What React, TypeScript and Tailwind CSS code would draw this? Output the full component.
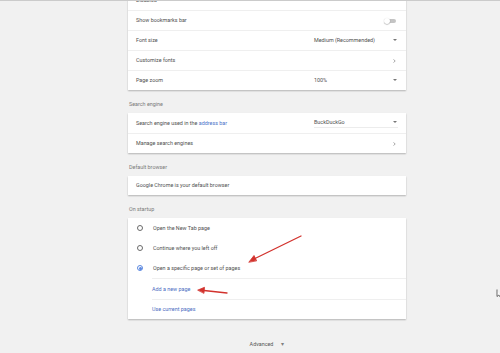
import React from 'react';

const Row = ({ children, first = false }: { children: React.ReactNode; first?: boolean }) => (
  <div className={`flex h-[20px] items-center pl-[8px] pr-[8px] ${first ? '' : 'border-t border-[#efefef]'}`}>{children}</div>
);

const Caret = ({ className = 'ml-auto mr-[1px]' }: { className?: string }) => (
  <div className={`h-0 w-0 border-x-[2px] border-t-[2.5px] border-x-transparent border-t-[#777] ${className}`} />
);

const Chevron = () => (
  <svg width="3" height="4" viewBox="0 0 3 4" className="ml-auto mr-[2px]">
    <path d="M0.6 0.4 L2.2 2 L0.6 3.6" fill="none" stroke="#8a8a8a" strokeWidth="0.8" />
  </svg>
);

const Select = ({ value, underline = false }: { value: string; underline?: boolean }) => (
  <div className={`ml-auto flex w-[84px] items-center ${underline ? 'border-b border-[#ececec]' : ''}`}>
    <span>{value}</span>
    <Caret />
  </div>
);

const Radio = ({ checked = false, label }: { checked?: boolean; label: string }) => (
  <div className="flex h-[20px] items-center pl-[9px]">
    <div className={`flex h-[6px] w-[6px] items-center justify-center rounded-full border ${checked ? 'border-[#5b88e0]' : 'border-[#6a6a6a]'}`}>
      {checked ? <div className="h-[3px] w-[3px] rounded-full bg-[#5b88e0]" /> : null}
    </div>
    <span className="ml-[10px]">{label}</span>
  </div>
);

const Header = ({ children }: { children: React.ReactNode }) => (
  <div className="pt-[9px] pb-[4px] pl-[1px] leading-[10px] text-[#7a7a7a]">{children}</div>
);

const card = 'bg-white shadow-[0_1px_1.5px_rgba(0,0,0,0.25)]';

export default function App() {
  return (
    <div className="relative h-[353px] w-[500px] overflow-hidden bg-[#f1f1f1] text-[5.4px] text-[#505050]" style={{ fontFamily: 'Roboto, "Liberation Sans", sans-serif' }}>
      <div className="ml-[128px] w-[278px]">
        <div className={`${card} -mt-[10px]`}>
          <Row first>
            <span>Disabled</span>
          </Row>
          <Row>
            <span>Show bookmarks bar</span>
            <div className="relative ml-auto mr-[2px] h-[6px] w-[12px]">
              <div className="absolute left-[2px] top-[1.5px] h-[3.5px] w-[10px] rounded-full bg-[#c4c4c4]" />
              <div className="absolute left-0 top-0 h-[6px] w-[6px] rounded-full bg-white shadow-[0_0.5px_1px_rgba(0,0,0,0.4)]" />
            </div>
          </Row>
          <Row>
            <span>Font size</span>
            <Select value="Medium (Recommended)" />
          </Row>
          <Row>
            <span>Customize fonts</span>
            <Chevron />
          </Row>
          <Row>
            <span>Page zoom</span>
            <Select value="100%" />
          </Row>
        </div>

        <Header>Search engine</Header>
        <div className={card}>
          <Row first>
            <span>
              Search engine used in the <span className="text-[#4b72c8]">address bar</span>
            </span>
            <Select value="BuckDuckGo" underline />
          </Row>
          <Row>
            <span>Manage search engines</span>
            <Chevron />
          </Row>
        </div>

        <Header>Default browser</Header>
        <div className={`${card} flex h-[19px] items-center pl-[8px]`}>
          <span>Google Chrome is your default browser</span>
        </div>

        <Header>On startup</Header>
        <div className={card}>
          <Radio label="Open the New Tab page" />
          <Radio label="Continue where you left off" />
          <Radio checked label="Open a specific page or set of pages" />
          <div className="ml-[24px] flex h-[21px] items-center border-t border-[#efefef] text-[#4b6cc2]">Add a new page</div>
          <div className="ml-[24px] flex h-[20px] items-center border-t border-[#efefef] text-[#4b6cc2]">Use current pages</div>
        </div>

        <div className="flex items-center justify-center pt-[21px] text-[#555]">
          <span>Advanced</span>
          <span className="ml-[8px] text-[6px] leading-none text-[#808080]">▾</span>
        </div>
      </div>

      {/* toolbar edge */}
      <div className="absolute left-0 top-0 h-[1px] w-full bg-[#cbcbcb]" />

      {/* annotation arrows */}
      <svg className="absolute left-0 top-0" width="500" height="353" viewBox="0 0 500 353">
        <g stroke="#d2322d" strokeWidth="1.3" strokeLinecap="round" fill="#d2322d">
          <line x1="301" y1="236" x2="254" y2="259" />
          <path d="M249 262 L254 255.5 L256.5 260.5 Z" strokeWidth="0.8" strokeLinejoin="round" />
          <line x1="227" y1="293" x2="204" y2="290.5" />
          <path d="M198 290 L204.5 287.3 L204 293 Z" strokeWidth="0.8" strokeLinejoin="round" />
        </g>
      </svg>

      {/* mouse pointer at edge */}
      <svg className="absolute left-[496px] top-[289px]" width="5" height="9" viewBox="0 0 5 9">
        <path d="M1 0.5 L1 7.5 L2.8 6 L4.5 8.5" fill="white" stroke="#444" strokeWidth="0.8" />
      </svg>
    </div>
  );
}
